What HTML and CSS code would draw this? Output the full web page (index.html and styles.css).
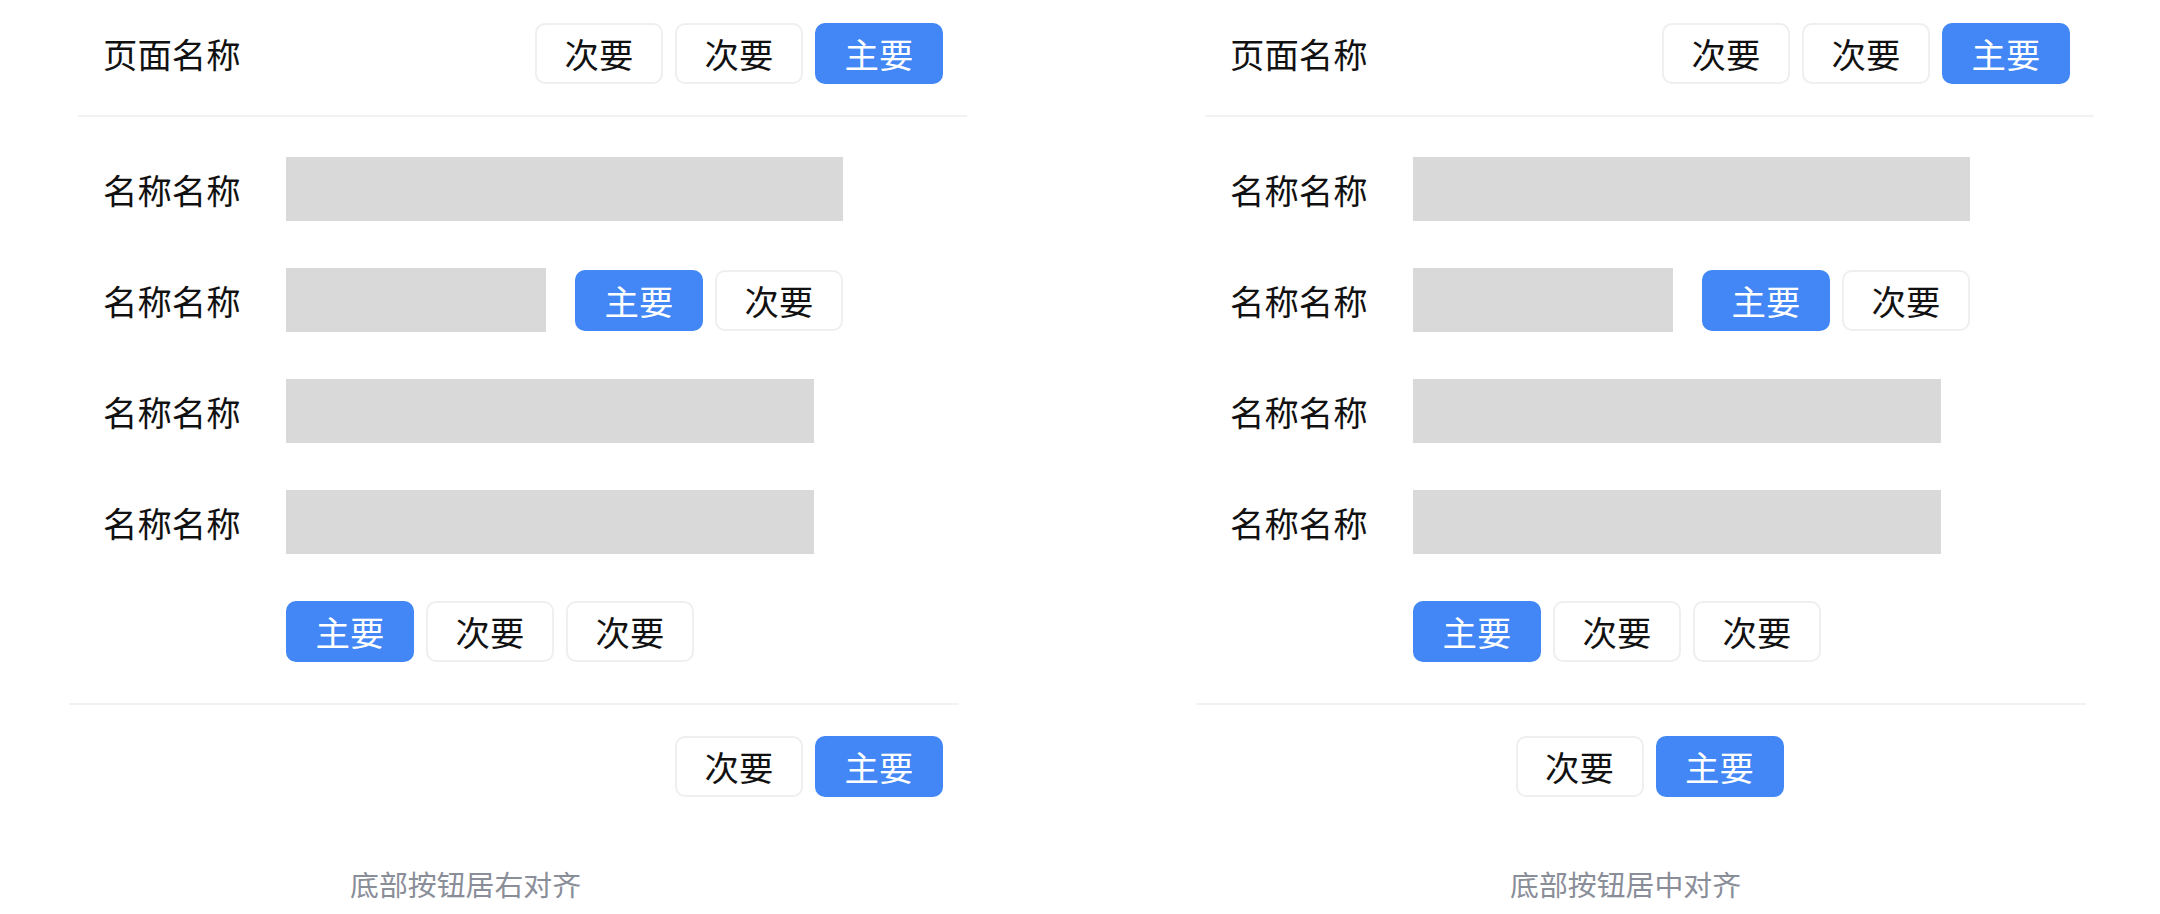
FILE: index.html
```html
<!DOCTYPE html>
<html lang="zh-CN">
<head>
<meta charset="utf-8">
<title>底部按钮对齐</title>
<link rel="stylesheet" href="styles.css">
</head>
<body>
<div class="page">
  <section class="panel">
    <div class="header">
      <div class="title">页面名称</div>
      <div class="btns">
        <div class="btn">次要</div>
        <div class="btn">次要</div>
        <div class="btn btn--primary">主要</div>
      </div>
    </div>
    <div class="form">
      <div class="row"><div class="label">名称名称</div><div class="box box--lg"></div></div>
      <div class="row"><div class="label">名称名称</div><div class="box box--sm"></div>
        <div class="btns row-actions"><div class="btn btn--primary">主要</div><div class="btn">次要</div></div></div>
      <div class="row"><div class="label">名称名称</div><div class="box box--md"></div></div>
      <div class="row"><div class="label">名称名称</div><div class="box box--md"></div></div>
      <div class="btns form-actions">
        <div class="btn btn--primary">主要</div>
        <div class="btn">次要</div>
        <div class="btn">次要</div>
      </div>
    </div>
    <div class="divider"></div>
    <div class="footer footer--right">
      <div class="btns">
        <div class="btn">次要</div>
        <div class="btn btn--primary">主要</div>
      </div>
    </div>
    <div class="caption caption--right">底部按钮居右对齐</div>
  </section>

  <section class="panel">
    <div class="header">
      <div class="title">页面名称</div>
      <div class="btns">
        <div class="btn">次要</div>
        <div class="btn">次要</div>
        <div class="btn btn--primary">主要</div>
      </div>
    </div>
    <div class="form">
      <div class="row"><div class="label">名称名称</div><div class="box box--lg"></div></div>
      <div class="row"><div class="label">名称名称</div><div class="box box--sm"></div>
        <div class="btns row-actions"><div class="btn btn--primary">主要</div><div class="btn">次要</div></div></div>
      <div class="row"><div class="label">名称名称</div><div class="box box--md"></div></div>
      <div class="row"><div class="label">名称名称</div><div class="box box--md"></div></div>
      <div class="btns form-actions">
        <div class="btn btn--primary">主要</div>
        <div class="btn">次要</div>
        <div class="btn">次要</div>
      </div>
    </div>
    <div class="divider"></div>
    <div class="footer footer--center">
      <div class="btns">
        <div class="btn">次要</div>
        <div class="btn btn--primary">主要</div>
      </div>
    </div>
    <div class="caption caption--center">底部按钮居中对齐</div>
  </section>
</div>
</body>
</html>
```
FILE: styles.css
```css
* { box-sizing: border-box; }
html, body { margin: 0; padding: 0; background: #ffffff; }
body {
  font-family: "Noto Sans CJK SC", "Noto Sans", sans-serif;
  color: #111111;
}
.page {
  display: flex;
  gap: 229px;
  padding-left: 69px;
}
.panel { width: 898px; flex: none; }

.header {
  margin-left: 9px;
  display: flex;
  align-items: center;
  justify-content: space-between;
  padding: 23px 24px 31px 25px;
  border-bottom: 2px solid #f2f2f2;
}
.title { font-size: 34.4px; line-height: 1; }

.btns { display: flex; gap: 12px; }
.btn {
  width: 128px;
  height: 61px;
  display: flex;
  align-items: center;
  justify-content: center;
  border: 2px solid #efefef;
  border-radius: 10px;
  background: #ffffff;
  color: #111111;
  font-size: 34.4px;
  line-height: 1;
}
.btn--primary {
  background: #4287f5;
  border-color: #4287f5;
  color: #ffffff;
}

.form { padding: 40px 0 41px 34px; }
.row {
  display: flex;
  align-items: center;
  height: 64px;
  margin-bottom: 47px;
}
.label { width: 183px; font-size: 34.4px; line-height: 1; flex: none; }
.box { height: 64px; background: #d9d9d9; flex: none; }
.box--lg { width: 557px; }
.box--md { width: 528px; }
.box--sm { width: 260px; }
.row-actions { margin-left: 29px; }
.form-actions { margin-left: 183px; }

.divider { width: 890px; height: 2px; background: #f2f2f2; }

.footer {
  margin-left: 9px;
  width: 889px;
  display: flex;
  padding: 31px 24px 0 25px;
}
.footer--right { justify-content: flex-end; }
.footer--center { justify-content: center; padding: 31px 0 0 0; }

.caption {
  margin-top: 66px;
  font-size: 28.9px;
  line-height: 40px;
  color: #8a8e99;
  white-space: nowrap;
}
.caption--right { padding-left: 281px; }
.caption--center { padding-left: 314px; }
```
